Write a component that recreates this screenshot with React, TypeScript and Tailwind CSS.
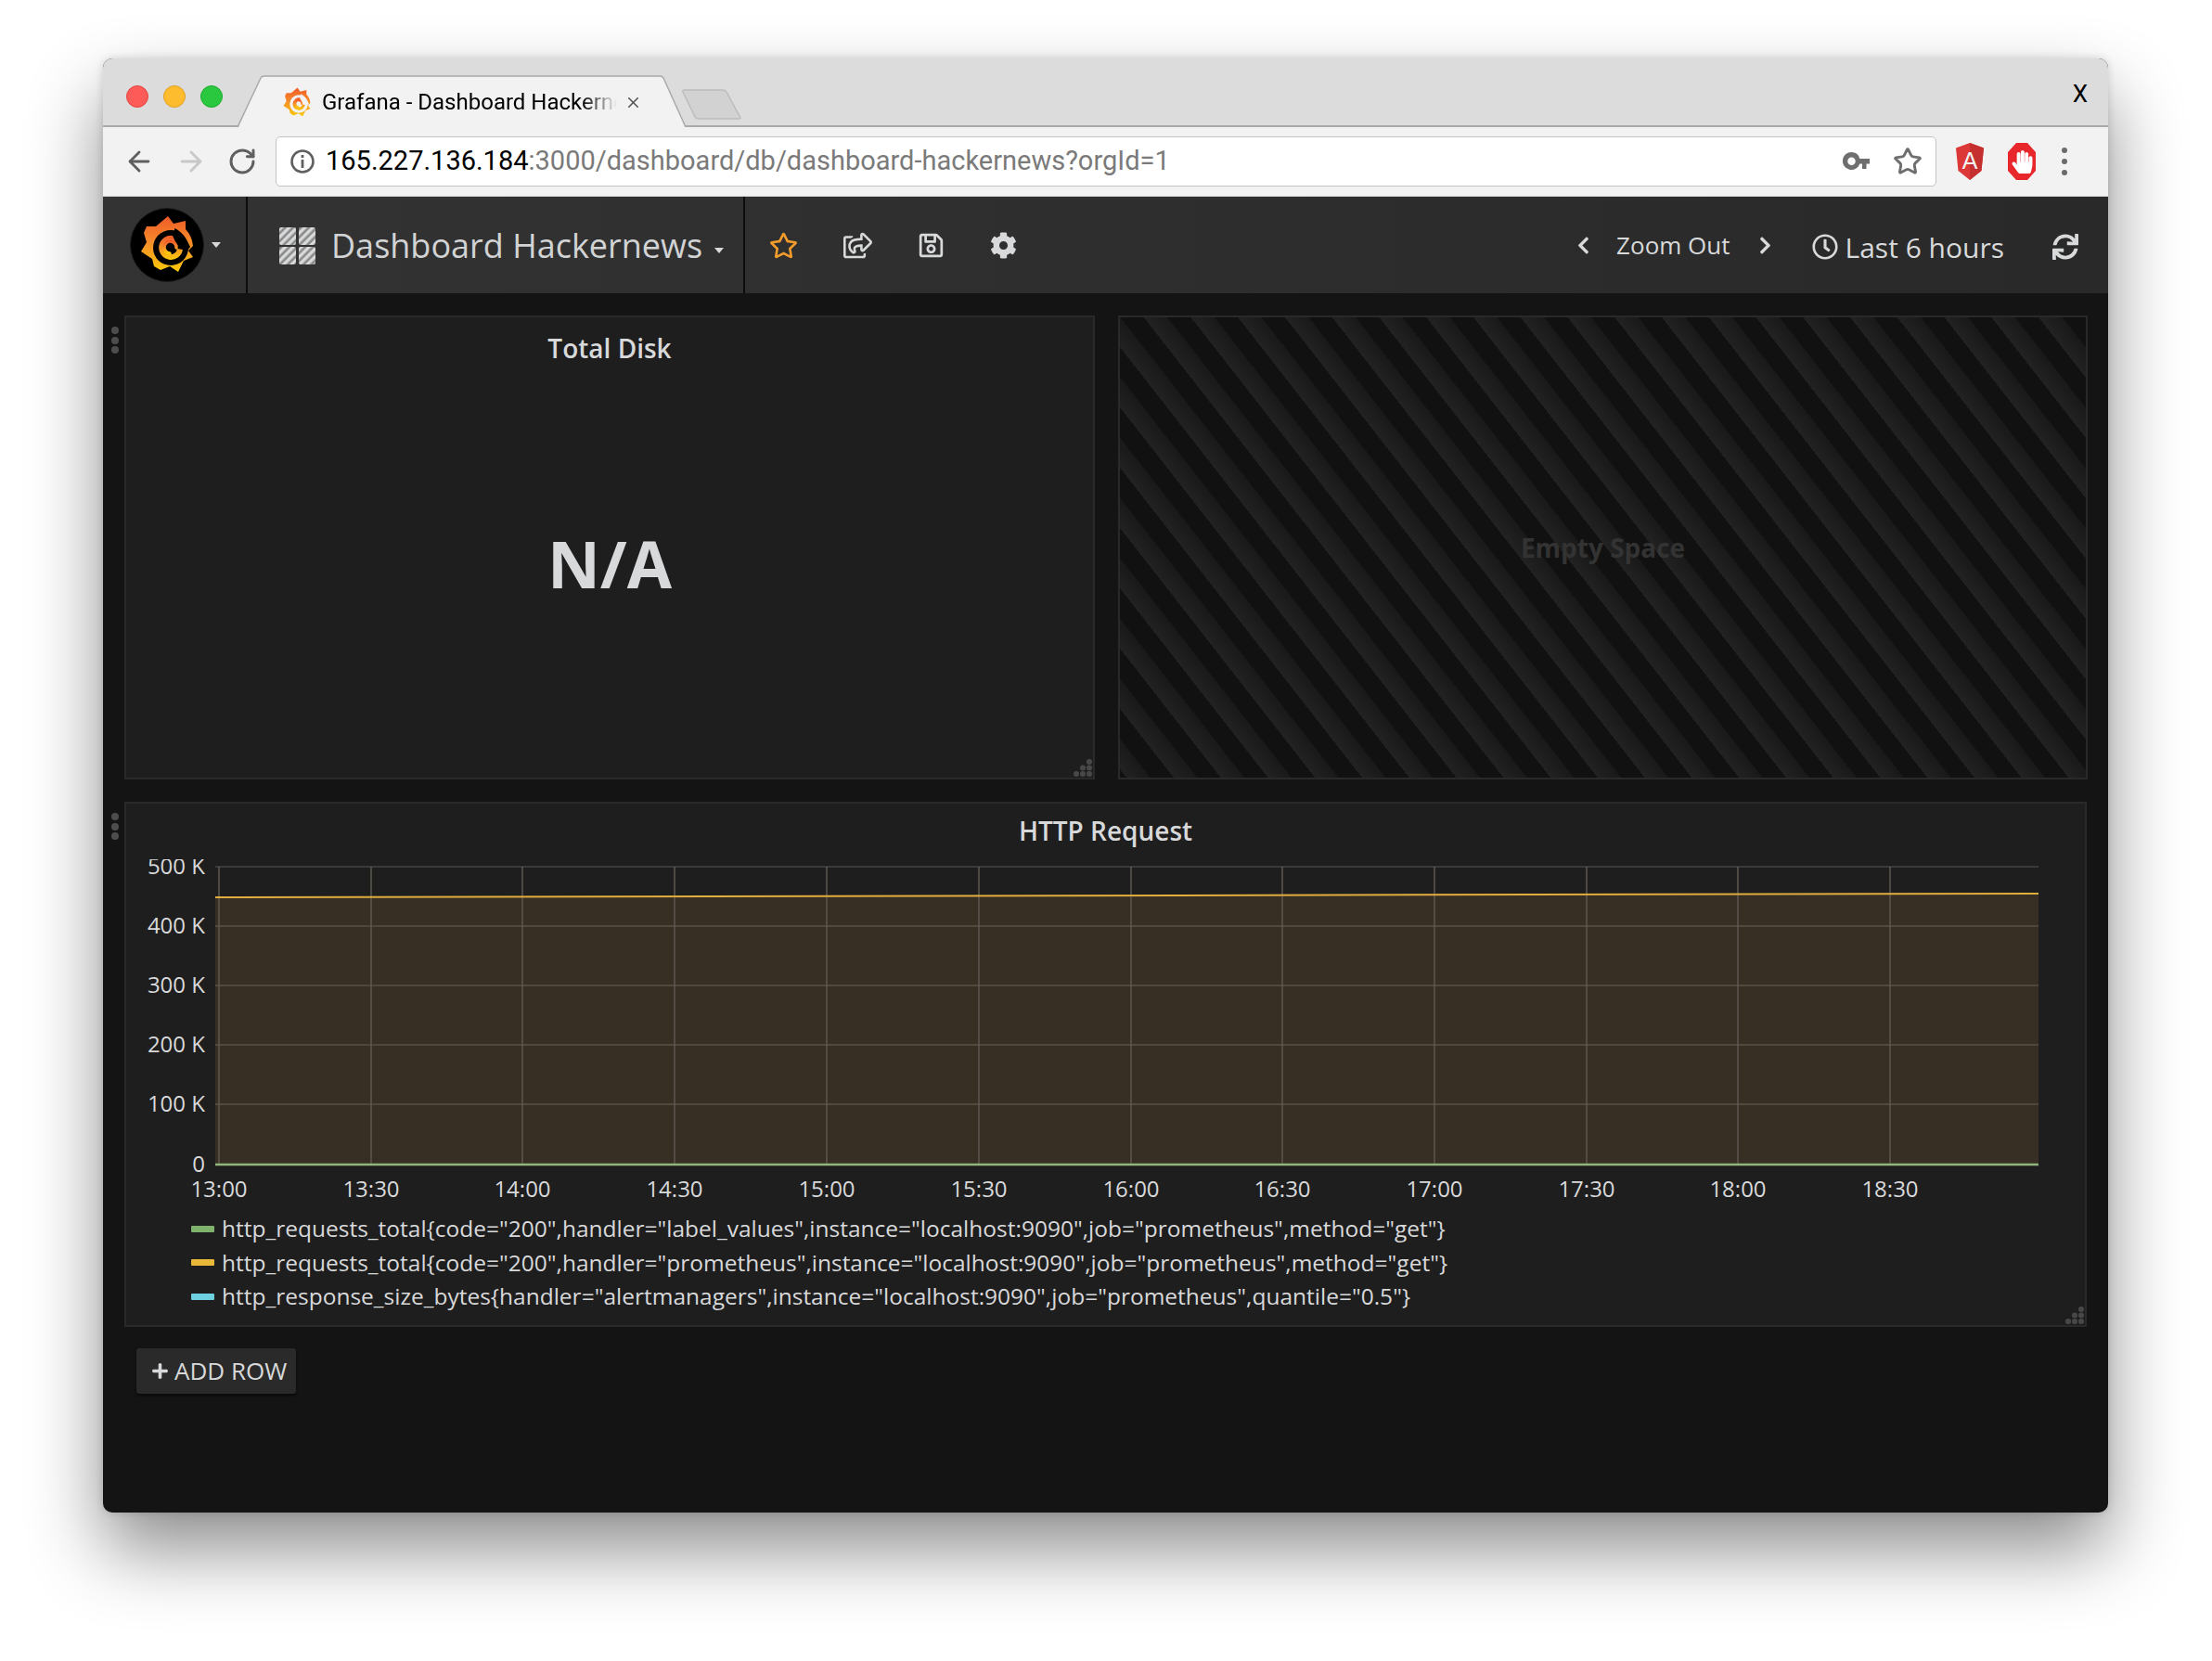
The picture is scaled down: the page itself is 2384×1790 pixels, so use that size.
import { ArrowLeft, ArrowRight, RotateCw, Star, X } from 'lucide-react';
import {
  FaChevronLeft,
  FaChevronRight,
  FaCog,
  FaHandPaper,
  FaPlus,
  FaRegClock,
  FaRegSave,
  FaRegShareSquare,
  FaRegStar,
  FaSync,
} from 'react-icons/fa';

const yTicks = [
  { label: '500 K', y: 933 },
  { label: '400 K', y: 997 },
  { label: '300 K', y: 1061 },
  { label: '200 K', y: 1125 },
  { label: '100 K', y: 1189 },
  { label: '0', y: 1254 },
];

const xTicks = [
  { label: '13:00', x: 235 },
  { label: '13:30', x: 399 },
  { label: '14:00', x: 562 },
  { label: '14:30', x: 726 },
  { label: '15:00', x: 890 },
  { label: '15:30', x: 1054 },
  { label: '16:00', x: 1218 },
  { label: '16:30', x: 1381 },
  { label: '17:00', x: 1545 },
  { label: '17:30', x: 1709 },
  { label: '18:00', x: 1872 },
  { label: '18:30', x: 2036 },
];

const legend = [
  { color: 'bg-[#7eb26d]', text: 'http_requests_total{code="200",handler="label_values",instance="localhost:9090",job="prometheus",method="get"}' },
  { color: 'bg-[#eab839]', text: 'http_requests_total{code="200",handler="prometheus",instance="localhost:9090",job="prometheus",method="get"}' },
  { color: 'bg-[#6ed0e0]', text: 'http_response_size_bytes{handler="alertmanagers",instance="localhost:9090",job="prometheus",quantile="0.5"}' },
];

// chart svg sits at this page offset, inside the bottom panel
const OX = 135;
const OY = 925;

function GrafanaMark({ id, hole }: { id: string; hole: string }) {
  return (
    <>
      <defs>
        <linearGradient id={id} x1="0" y1="0" x2="0" y2="1">
          <stop offset="0" stopColor="#f05a28" />
          <stop offset="0.45" stopColor="#f58a2a" />
          <stop offset="1" stopColor="#fbca0a" />
        </linearGradient>
      </defs>
      <path
        d="M41 9 L47 17 L60 14 L60 23 Q67 30 68 41 L63 46 L68 53 L58 57 L52 69 L43 63 L33 67 L26 63 L24 55 L12 47 L18 37 L15 27 L18 20 L28 20 Z"
        fill={`url(#${id})`}
      />
      <path d="M48 22 Q58 26 65 42 L62 46 L60 42 Q56 32 48 27 Z" fill={hole} />
      <circle cx="44" cy="43" r="19" fill={hole} />
      <path
        d="M46 30 A13 13 0 1 0 57 45 L51 44 A7 7 0 1 1 44 36 Q51 36 52 43"
        fill={`url(#${id})`}
        stroke="none"
      />
      <path d="M43 49 A6.5 6.5 0 1 1 50 43" fill="none" stroke={`url(#${id})`} strokeWidth="3.5" strokeLinecap="round" />
    </>
  );
}

function DragDots() {
  return (
    <div className="absolute left-[-16px] top-[10px] flex flex-col gap-[2.5px]">
      <span className="w-2 h-2 rounded-full bg-[#4d4d4d]" />
      <span className="w-2 h-2 rounded-full bg-[#4d4d4d]" />
      <span className="w-2 h-2 rounded-full bg-[#4d4d4d]" />
    </div>
  );
}

function ResizeDots() {
  return (
    <svg className="absolute right-0 bottom-0" width="22" height="22" viewBox="0 0 22 22" fill="#484848">
      <circle cx="18" cy="5" r="3" />
      <circle cx="11" cy="11.5" r="3" />
      <circle cx="18" cy="11.5" r="3" />
      <circle cx="4" cy="18" r="3" />
      <circle cx="11" cy="18" r="3" />
      <circle cx="18" cy="18" r="3" />
    </svg>
  );
}

function DashIcon() {
  return (
    <svg width="40" height="40" viewBox="0 0 40 40" className="shrink-0">
      <defs>
        <pattern id="hatch" width="6" height="6" patternUnits="userSpaceOnUse" patternTransform="rotate(45)">
          <rect width="6" height="6" fill="#8a8a8a" />
          <rect width="3.4" height="6" fill="#d8d9da" />
        </pattern>
      </defs>
      <rect x="0" y="0" width="18" height="19" rx="2" fill="url(#hatch)" />
      <rect x="21" y="0" width="18" height="19" rx="2" fill="url(#hatch)" />
      <rect x="0" y="21" width="18" height="19" rx="2" fill="url(#hatch)" />
      <rect x="21" y="21" width="18" height="19" rx="2" fill="url(#hatch)" />
    </svg>
  );
}

function TabBar() {
  return (
    <div className="relative h-[74px] bg-[#dcdcdc] border-b-2 border-[#a9a9a9] rounded-t-[10px] flex items-start pl-[25px] pt-[29px]">
      <div className="flex gap-[16px]">
        <span className="w-6 h-6 rounded-full bg-[#fc5b57] border border-[#e2463f]" />
        <span className="w-6 h-6 rounded-full bg-[#fdbc2e] border border-[#dfa023]" />
        <span className="w-6 h-6 rounded-full bg-[#29c83f] border border-[#1dac2c]" />
      </div>
      {/* tab outline */}
      <svg className="absolute left-[145px] top-[18px]" width="720" height="58" viewBox="0 0 720 58" fill="none">
        <path d="M1 56 L25 3 Q26 1 29 1 L455 1 Q458 1 459 3 L483 56 Z" fill="#f2f2f2" />
        <path d="M0 56 L25 3 Q26 1 29 1 L455 1 Q458 1 459 3 L483 56" stroke="#a9a9a9" strokeWidth="1.5" />
        <path d="M480 18 Q479 16 482 16 L523 16 Q526 16 527 18 L542 46 Q542 47 539 47 L497 47 Q494 47 493 45 Z" fill="#d2d2d2" stroke="#bcbcbc" strokeWidth="1.5" />
      </svg>
      <div className="absolute left-[192px] top-[27px] h-[40px] flex items-center w-[400px]">
        <svg width="34" height="34" viewBox="8 6 64 66" className="shrink-0">
          <GrafanaMark id="fav" hole="#f2f2f2" />
        </svg>
        <span className="ml-[10px] w-[318px] overflow-hidden whitespace-nowrap text-[24px] text-black [font-family:Roboto,sans-serif] [mask-image:linear-gradient(to_right,black_88%,transparent)]">
          Grafana - Dashboard Hackernews
        </span>
        <X className="ml-[8px] shrink-0 text-[#555]" size={19} strokeWidth={2} />
      </div>
      <span className="absolute right-[22px] top-[19px] text-[26px] text-black [font-family:Roboto,sans-serif]">X</span>
    </div>
  );
}

function AddressBar() {
  return (
    <div className="h-[75px] bg-[#f2f2f2] flex items-center pl-[22px] pr-[26px] border-b border-[#d2d2d2]">
      <ArrowLeft className="text-[#5f5f5f]" size={34} strokeWidth={2} />
      <ArrowRight className="ml-[22px] text-[#c8c8c8]" size={34} strokeWidth={2} />
      <RotateCw className="ml-[22px] text-[#5f5f5f]" size={32} strokeWidth={2.2} />
      <div className="ml-[20px] w-[1790px] h-[54px] bg-white border border-[#c4c4c4] rounded-[5px] flex items-center pl-[14px] pr-[14px] [font-family:Roboto,sans-serif]">
        <svg width="28" height="28" viewBox="0 0 28 28" fill="none" className="shrink-0">
          <circle cx="14" cy="14" r="11.5" stroke="#5f5f5f" strokeWidth="2.6" />
          <rect x="12.6" y="12" width="2.8" height="9" fill="#5f5f5f" />
          <rect x="12.6" y="7" width="2.8" height="3" fill="#5f5f5f" />
        </svg>
        <span className="ml-[11px] text-[29px] whitespace-nowrap text-black">
          165.227.136.184<span className="text-[#7a7a7a]">:3000/dashboard/db/dashboard-hackernews?orgId=1</span>
        </span>
        <div className="ml-auto flex items-center gap-[24px]">
          <svg width="30" height="22" viewBox="0 0 30 22" fill="#6e6e6e">
            <path d="M9.5 1a9.5 9.5 0 1 0 8.9 12.5H21V19h4.5v-5.5H29V8H18.4A9.5 9.5 0 0 0 9.5 1zm0 5.5a4 4 0 1 1 0 8.500a4 4 0 0 1 0-8.500z" />
          </svg>
          <Star className="text-[#6e6e6e]" size={32} strokeWidth={2.2} />
        </div>
      </div>
      <div className="ml-[21px] flex items-center gap-[26px]">
        <svg width="30" height="40" viewBox="0 0 30 40" className="shrink-0">
          <path d="M15 0 L30 5.500 L27.500 30 L15 40 L2.500 30 L0 5.500 Z" fill="#dd3838" />
          <path d="M15 0 L30 5.500 L27.500 30 L15 40 Z" fill="#c52f2f" />
          <text x="15" y="28" textAnchor="middle" fontSize="25" fontFamily="Liberation Sans, sans-serif" fill="#f2f2f2">A</text>
        </svg>
        <div className="relative w-[30px] h-10 flex items-center justify-center bg-[#e8272c] [clip-path:polygon(30%_0,70%_0,100%_25%,100%_75%,70%_100%,30%_100%,0_75%,0_25%)]">
          <FaHandPaper className="text-white" size={25} />
        </div>
        <div className="ml-[2px] flex flex-col gap-[6px]">
          <span className="w-[6px] h-[6px] rounded-full bg-[#6a6a6a]" />
          <span className="w-[6px] h-[6px] rounded-full bg-[#6a6a6a]" />
          <span className="w-[6px] h-[6px] rounded-full bg-[#6a6a6a]" />
        </div>
      </div>
    </div>
  );
}

function GrafanaNav() {
  return (
    <div className="h-[104px] bg-gradient-to-r from-[#333333] to-[#292929] flex items-stretch text-[#d8d9da]">
      <div className="w-[156px] border-r-2 border-[#0c0c0c] flex items-center pl-[29px]">
        <svg width="80" height="80" viewBox="0 0 80 80" className="shrink-0">
          <circle cx="40" cy="40" r="39.500" fill="#000" stroke="#1c1c1c" />
          <GrafanaMark id="nav" hole="#000" />
        </svg>
        <span className="ml-[8px] w-0 h-0 border-x-[5px] border-x-transparent border-t-[6px] border-t-[#d8d9da]" />
      </div>
      <div className="w-[536px] border-r-2 border-[#0c0c0c] flex items-center pl-[34px] pt-px">
        <DashIcon />
        <span className="ml-[16px] text-[36px] text-[#d2d3d4] whitespace-nowrap">Dashboard Hackernews</span>
        <span className="ml-[13px] mt-[10px] w-0 h-0 border-x-[5px] border-x-transparent border-t-[6px] border-t-[#d8d9da]" />
      </div>
      <div className="flex items-center pl-[26px] gap-[49px]">
        <FaRegStar className="text-[#f39c2c]" size={31} />
        <FaRegShareSquare size={31} />
        <FaRegSave size={29} />
        <FaCog size={29} />
      </div>
      <div className="ml-auto flex items-center pr-[32px]">
        <FaChevronLeft size={21} />
        <span className="ml-[25px] text-[26px]">Zoom Out</span>
        <FaChevronRight className="ml-[27px]" size={21} />
        <FaRegClock className="ml-[40px] mt-[4px]" size={28} />
        <span className="ml-[8px] mt-[4px] text-[30px] whitespace-nowrap">Last 6 hours</span>
        <FaSync className="ml-[52px] mt-[3px]" size={28} />
      </div>
    </div>
  );
}

function HttpChart() {
  const x0 = 231 - OX;
  const x1 = 2196 - OX;
  const top = yTicks[0].y - OY;
  const bottom = yTicks[5].y - OY;
  return (
    <svg width="2112" height="376" viewBox="0 0 2112 376" className="block">
      <polygon points={`${x0},${966 - OY} ${x1},${962 - OY} ${x1},${bottom} ${x0},${bottom}`} fill="#382f24" />
      {yTicks.map((t) => (
        <g key={t.label}>
          <line x1={x0} x2={x1} y1={t.y - OY} y2={t.y - OY} stroke={t.y < 960 ? '#444' : '#5a5246'} strokeWidth="1.5" />
          <text x={x0 - 11} y={t.y - OY + 8} textAnchor="end" fontSize="24" fill="#d8d9da">
            {t.label}
          </text>
        </g>
      ))}
      {xTicks.map((t) => (
        <g key={t.label}>
          <line x1={t.x - OX} x2={t.x - OX} y1={top} y2={bottom} stroke="#5f5850" strokeWidth="1.5" />
          <text x={t.x - OX} y={bottom + 35} textAnchor="middle" fontSize="24" fill="#d8d9da">
            {t.label}
          </text>
        </g>
      ))}
      <line x1={x0} x2={x1} y1={966 - OY} y2={962 - OY} stroke="#e0ad3e" strokeWidth="2" />
      <line x1={x0} x2={x1} y1={bottom} y2={bottom} stroke="#8fb67c" strokeWidth="2.5" />
    </svg>
  );
}

export default function App() {
  return (
    <div className="w-[2384px] h-[1790px] bg-white pt-[63px] pl-[111px] overflow-hidden [font-family:'Open_Sans',sans-serif]">
      <div className="w-[2161px] h-[1567px] rounded-[10px] bg-[#141414] flex flex-col shadow-[0_40px_80px_rgba(0,0,0,0.45),0_0_10px_rgba(0,0,0,0.15)]">
        <TabBar />
        <AddressBar />
        <GrafanaNav />

        <div className="pt-[24px] pl-[23px] pr-[23px]">
          <div className="grid grid-cols-[1046px_1045px] gap-[25px]">
            <div className="relative h-[500px] bg-[#1f1e1f] border-2 border-[#292929] flex flex-col items-center">
              <DragDots />
              <h2 className="mt-[14px] text-[28px] leading-[38px] font-semibold text-[#d8d9da]">Total Disk</h2>
              <div className="mt-[168px] text-[70px] leading-[90px] font-bold text-[#d8d9da]">N/A</div>
              <ResizeDots />
            </div>
            <div className="h-[500px] border-2 border-[#292929] flex items-center justify-center bg-[repeating-linear-gradient(-128deg,#111111,#111111_20px,#191919_20px,#222222_40px)]">
              <span className="text-[28px] font-bold text-[#333333]">Empty Space</span>
            </div>
          </div>

          <div className="relative mt-[24px] h-[566px] bg-[#1f1e1f] border-2 border-[#292929]">
            <DragDots />
            <h2 className="pt-[10px] h-[60px] text-center text-[28px] leading-[38px] font-semibold text-[#d8d9da]">HTTP Request</h2>
            <HttpChart />
            <ul className="mt-[4px] pl-[70px] text-[24.500px] leading-[36.500px] text-[#d8d9da]">
              {legend.map((l) => (
                <li key={l.text} className="flex items-center whitespace-nowrap">
                  <span className={`w-[25px] h-[7px] mr-[8px] rounded-[1px] ${l.color}`} />
                  {l.text}
                </li>
              ))}
            </ul>
            <ResizeDots />
          </div>

          <button className="mt-[23px] ml-[13px] w-[172px] h-[49px] rounded-[3px] bg-[#2a2a2a] shadow-[0_2px_3px_#0a0a0a] flex items-center pl-[16px] text-[26px] text-[#d8d9da]">
            <FaPlus size={19} />
            <span className="ml-[6px]">ADD ROW</span>
          </button>
        </div>
      </div>
    </div>
  );
}
